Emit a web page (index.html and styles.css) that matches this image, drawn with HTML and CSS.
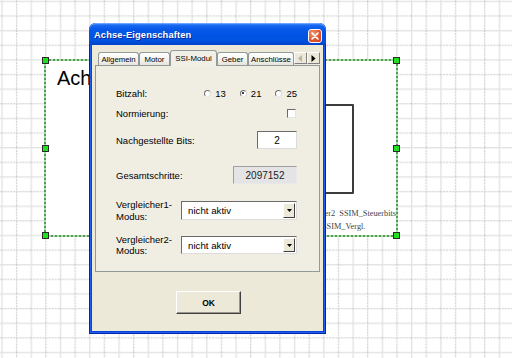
FILE: index.html
```html
<!DOCTYPE html>
<html lang="de">
<head>
<meta charset="utf-8">
<title>Achse-Eigenschaften</title>
<link rel="stylesheet" href="styles.css">
</head>
<body>
<div class="canvas">
  <svg class="grid" width="512" height="358" viewBox="0 0 512 358">
    <defs>
      <pattern id="g" patternUnits="userSpaceOnUse" x="1.3" y="0.7" width="29.26" height="29.26">
        <rect x="0" y="0" width="1.4" height="29.26" fill="#e4e4e4"/>
        <rect x="0" y="0" width="29.26" height="1.4" fill="#e4e4e4"/>
        <line x1="15.33" y1="0" x2="15.33" y2="29.26" stroke="#c6c6c6" stroke-width="1" stroke-dasharray="2 1"/>
        <line x1="0" y1="15.33" x2="29.26" y2="15.33" stroke="#c6c6c6" stroke-width="1" stroke-dasharray="2 1"/>
      </pattern>
    </defs>
    <rect width="512" height="358" fill="url(#g)"/>
  </svg>

  <div class="shape">
    <div class="shape-title">Achse</div>
    <div class="block"></div>
    <div class="lbl lbl1">Steuer2&nbsp;&nbsp;SSIM_Steuerbits</div>
    <div class="lbl lbl2">SSIM_Vergl.</div>
    <svg class="sel" width="354" height="178" viewBox="0 0 354 178">
      <rect x="1" y="1" width="352" height="176" fill="none" stroke="#39d639" stroke-width="1"/>
      <rect x="1" y="1" width="352" height="176" fill="none" stroke="#333" stroke-width="1" stroke-dasharray="2 2"/>
    </svg>
    <span class="h h-tl"></span><span class="h h-tr"></span>
    <span class="h h-ml"></span><span class="h h-mr"></span>
    <span class="h h-bl"></span><span class="h h-br"></span>
    <span class="h h-tm"></span><span class="h h-bm"></span>
  </div>

  <div class="dialog">
    <div class="titlebar">
      <span class="title">Achse-Eigenschaften</span>
      <span class="close">
        <svg width="12" height="12" viewBox="0 0 12 12"><path d="M3 3 L9 9 M9 3 L3 9" stroke="#fff" stroke-width="1.7" stroke-linecap="round"/></svg>
      </span>
    </div>
    <div class="body">
      <div class="tabs">
        <div class="tab w41">Allgemein</div>
        <div class="tab w31">Motor</div>
        <div class="tab active w47">SSI-Modul</div>
        <div class="tab w31">Geber</div>
        <div class="tab w46">Anschlüsse</div>
        <div class="scroll">
          <span class="sbtn"><svg width="5" height="7" viewBox="0 0 5 7"><path d="M4 0 L0 3.5 L4 7 Z" fill="#b8b4a6"/></svg></span>
          <span class="sbtn"><svg width="5" height="7" viewBox="0 0 5 7"><path d="M0.5 0 L4.5 3.5 L0.5 7 Z" fill="#000"/></svg></span>
        </div>
      </div>
      <div class="panel">
        <div class="row r1">
          <span class="label">Bitzahl:</span>
          <div class="radios">
            <span class="radio"><span class="circle"></span>13</span>
            <span class="radio"><span class="circle on"></span>21</span>
            <span class="radio"><span class="circle"></span>25</span>
          </div>
        </div>
        <div class="row r2">
          <span class="label">Normierung:</span>
          <span class="check"></span>
        </div>
        <div class="row r3">
          <span class="label">Nachgestellte Bits:</span>
          <span class="field small">2</span>
        </div>
        <div class="row r4">
          <span class="label">Gesamtschritte:</span>
          <span class="field ro">2097152</span>
        </div>
        <div class="row r5">
          <span class="label two">Vergleicher1-<br>Modus:</span>
          <span class="select"><span class="val">nicht aktiv</span><span class="drop"><svg width="5" height="3" viewBox="0 0 5 3"><path d="M0 0 H5 L2.5 3 Z" fill="#000"/></svg></span></span>
        </div>
        <div class="row r6">
          <span class="label two">Vergleicher2-<br>Modus:</span>
          <span class="select"><span class="val">nicht aktiv</span><span class="drop"><svg width="5" height="3" viewBox="0 0 5 3"><path d="M0 0 H5 L2.5 3 Z" fill="#000"/></svg></span></span>
        </div>
      </div>
      <div class="actions">
        <span class="btn">OK</span>
      </div>
    </div>
  </div>
</div>
</body>
</html>
```

FILE: styles.css
```css
html, body {
  margin: 0;
  padding: 0;
  background: #ffffff;
}

.canvas {
  position: relative;
  width: 512px;
  height: 358px;
  overflow: hidden;
  font-family: "Liberation Sans", Arial, sans-serif;
}

.grid {
  position: absolute;
  left: 0;
  top: 0;
}

/* diagram shape on the canvas */
.shape {
  position: absolute;
  left: 44px;
  top: 59px;
  width: 354px;
  height: 178px;
  background: #ffffff;
}

.sel {
  position: absolute;
  left: 0;
  top: 0;
}

.shape-title {
  position: absolute;
  left: 13px;
  top: 9px;
  font-size: 20px;
  line-height: 20px;
  color: #000;
}

.block {
  position: absolute;
  left: 150px;
  top: 45px;
  width: 156px;
  height: 86px;
  border: 2px solid #3c3c3c;
  border-radius: 1px;
}

.lbl {
  position: absolute;
  font-family: "Liberation Serif", "Times New Roman", serif;
  font-size: 8.3px;
  line-height: 10px;
  color: #444;
  white-space: nowrap;
}

.lbl1 {
  right: 2px;
  top: 150px;
}

.lbl2 {
  left: 278px;
  top: 163px;
}

.h {
  position: absolute;
  width: 5px;
  height: 5px;
  background: #1fe01f;
  border: 1px solid #2a2a2a;
}

.h-tl { left: -2px; top: -2px; }
.h-tr { right: -2px; top: -2px; }
.h-ml { left: -2px; top: 86px; }
.h-mr { right: -2px; top: 86px; }
.h-bl { left: -2px; bottom: -2px; }
.h-br { right: -2px; bottom: -2px; }
.h-tm { left: 174px; top: -2px; }
.h-bm { left: 174px; bottom: -2px; }

/* dialog window */
.dialog {
  position: absolute;
  left: 89px;
  top: 23px;
  width: 237px;
  height: 311px;
  box-sizing: border-box;
  display: flex;
  flex-direction: column;
  background: #0b3fdc;
  border-radius: 7px 7px 0 0;
  box-shadow: inset 0 0 0 1px #0023a8, inset 0 0 0 2px #1e5ff0;
}

.titlebar {
  height: 22px;
  flex: none;
  display: flex;
  align-items: center;
  justify-content: space-between;
  padding: 1px 4px 0 5px;
  box-sizing: border-box;
  border-radius: 7px 7px 0 0;
  background: linear-gradient(#4a93ff 0%, #1566f0 12%, #0558e8 30%, #0054e3 55%, #0152df 80%, #0043c8 100%);
  box-shadow: inset 0 1px 0 #6aa6ff;
}

.title {
  color: #ffffff;
  font-weight: bold;
  font-size: 9.3px;
  letter-spacing: 0.15px;
  text-shadow: 1px 1px 0 #0a2a9c;
}

.close {
  width: 14px;
  height: 14px;
  box-sizing: border-box;
  border: 1px solid #ffffff;
  border-radius: 3px;
  background: radial-gradient(circle at 35% 30%, #f29a7c 0%, #e2562e 55%, #c8391a 100%);
  display: flex;
  align-items: center;
  justify-content: center;
  margin-top: 2px;
}

.body {
  flex: 1;
  margin: 0 3px 3px;
  background: #ece9d8;
  padding: 7px 3px 17px;
  display: flex;
  flex-direction: column;
}

.tabs {
  display: flex;
  align-items: flex-end;
  height: 13px;
  padding-left: 3px;
  position: relative;
  z-index: 1;
}

.tab {
  height: 13px;
  box-sizing: border-box;
  border: 1px solid #919b9c;
  border-bottom: none;
  border-radius: 3px 3px 0 0;
  background: linear-gradient(#ffffff, #f3f2ec 60%, #e6e4da);
  font-size: 7.8px;
  color: #000;
  display: flex;
  align-items: center;
  justify-content: center;
  padding-top: 1px;
}

.tab.active {
  height: 16px;
  margin-bottom: -1px;
  background: #f2f0e6;
  border-color: #919b9c;
  padding-bottom: 2px;
}

.w41 { width: 41px; }
.w31 { width: 31px; }
.w47 { width: 47px; }
.w46 { width: 46px; }

.scroll {
  display: flex;
  margin-bottom: 1px;
}

.sbtn {
  width: 13px;
  height: 12px;
  box-sizing: border-box;
  background: #ece9d8;
  border: 1px solid;
  border-color: #ffffff #808080 #808080 #ffffff;
  display: flex;
  align-items: center;
  justify-content: center;
}

.panel {
  height: 207px;
  box-sizing: border-box;
  border: 1px solid #919b9c;
  background: #f0eee3;
  padding: 19px 22px 0 20px;
  display: flex;
  flex-direction: column;
  font-size: 9.5px;
  color: #000;
}

.row {
  display: flex;
  align-items: center;
  justify-content: space-between;
}

.r1 { height: 16px; }
.r2 { height: 16px; margin-top: 4px; }
.r3 { height: 18px; margin-top: 10px; }
.r4 { height: 18px; margin-top: 17px; }
.r5 { height: 19px; margin-top: 17px; }
.r6 { height: 18px; margin-top: 16px; }

.label {
  white-space: nowrap;
}

.label.two {
  line-height: 11.5px;
}

.radios {
  display: flex;
  gap: 14px;
}

.radio {
  display: flex;
  align-items: center;
  gap: 4px;
}

.circle {
  width: 7px;
  height: 7px;
  box-sizing: border-box;
  border-radius: 50%;
  background: #ffffff;
  border: 1px solid;
  border-color: #707070 #d8d8d8 #e8e8e8 #707070;
  position: relative;
}

.circle.on::after {
  content: "";
  position: absolute;
  left: 1.5px;
  top: 1.5px;
  width: 2px;
  height: 2px;
  border-radius: 50%;
  background: #000;
}

.check {
  width: 9px;
  height: 9px;
  box-sizing: border-box;
  background: #ffffff;
  border: 1px solid;
  border-color: #6a6a6a #e4e4e4 #e4e4e4 #6a6a6a;
  margin-right: 1px;
}

.field {
  height: 18px;
  box-sizing: border-box;
  background: #ffffff;
  border: 1px solid;
  border-color: #6a6a6a #dcdcdc #dcdcdc #6a6a6a;
  display: flex;
  align-items: center;
  justify-content: center;
  font-size: 10px;
}

.field.small {
  width: 40px;
}

.field.ro {
  width: 64px;
  background: #e4e4e4;
  border-color: #a0a0a0 #e8e8e8 #e8e8e8 #a0a0a0;
  color: #222;
}

.select {
  width: 116px;
  height: 100%;
  box-sizing: border-box;
  background: #ffffff;
  border: 1px solid;
  border-color: #6a6a6a #dcdcdc #dcdcdc #6a6a6a;
  display: flex;
  align-items: center;
  justify-content: space-between;
  padding: 1px 1px 1px 6px;
}

.val {
  font-size: 9.7px;
}

.drop {
  width: 12px;
  height: 100%;
  box-sizing: border-box;
  background: #ece9d8;
  border: 1px solid;
  border-color: #ffffff #404040 #404040 #ffffff;
  display: flex;
  align-items: center;
  justify-content: center;
}

.actions {
  display: flex;
  justify-content: center;
  margin-top: 19px;
  padding-left: 2px;
}

.btn {
  width: 65px;
  height: 23px;
  box-sizing: border-box;
  background: #ece9d8;
  border: 1px solid;
  border-color: #ffffff #404040 #404040 #ffffff;
  box-shadow: inset -1px -1px 0 #9a968a;
  display: flex;
  align-items: center;
  justify-content: center;
  font-size: 8.5px;
  font-weight: bold;
  color: #000;
}
```
